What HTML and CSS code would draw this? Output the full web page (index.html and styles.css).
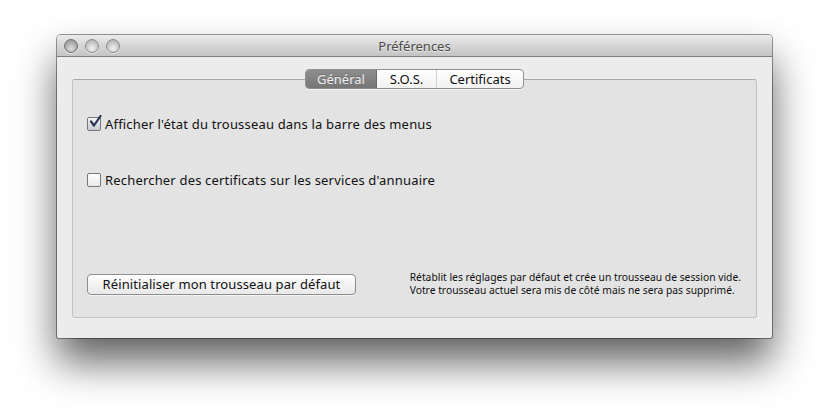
FILE: index.html
```html
<!DOCTYPE html>
<html lang="fr">
<head>
<meta charset="utf-8">
<title>Préférences</title>
<link rel="stylesheet" href="styles.css">
</head>
<body>
<div class="window">
  <div class="titlebar">
    <div class="lights">
      <span class="light light-close"></span>
      <span class="light"></span>
      <span class="light"></span>
    </div>
    <div class="title">Préférences</div>
  </div>
  <div class="content">
    <div class="tabs">
      <span class="tab tab-active">Général</span>
      <span class="tab">S.O.S.</span>
      <span class="tab tab-sep">Certificats</span>
    </div>
    <div class="group">
      <label class="check-row">
        <span class="box checked">
          <svg width="14" height="14" viewBox="0 0 14 14"><path d="M3 6.5 L6 10.5 L12.5 1" fill="none" stroke="#2a3550" stroke-width="2.2" stroke-linecap="round" stroke-linejoin="round"/></svg>
        </span>
        <span>Afficher l'état du trousseau dans la barre des menus</span>
      </label>
      <label class="check-row second">
        <span class="box"></span>
        <span>Rechercher des certificats sur les services d'annuaire</span>
      </label>
      <div class="bottom">
        <button class="btn">Réinitialiser mon trousseau par défaut</button>
        <p class="note">Rétablit les réglages par défaut et crée un trousseau de session vide.<br>Votre trousseau actuel sera mis de côté mais ne sera pas supprimé.</p>
      </div>
    </div>
  </div>
</div>
</body>
</html>
```
FILE: styles.css
```css
html, body {
  margin: 0;
  background: #ffffff;
}
body {
  box-sizing: border-box;
  min-height: 417px;
  padding: 35px 0 0 57px;
  font-family: "Noto Sans", "DejaVu Sans", sans-serif;
  color: #111;
}
.window {
  width: 715px;
  height: 303px;
  background: #ececec;
  border-radius: 4px 4px 2px 2px;
  box-shadow: 0 24px 40px rgba(0,0,0,0.62), 0 0 0 1px rgba(0,0,0,0.4);
  display: flex;
  flex-direction: column;
  overflow: hidden;
}
.titlebar {
  height: 21px;
  border-bottom: 1px solid #7d7d7d;
  background: linear-gradient(#ebebeb, #d6d6d6 50%, #c4c4c4);
  display: flex;
  align-items: center;
  position: relative;
}
.lights {
  display: flex;
  gap: 7px;
  padding-left: 7px;
}
.light {
  width: 12px;
  height: 12px;
  border-radius: 50%;
  border: 1px solid #8c8c8c;
  background: radial-gradient(circle at 50% 70%, #f2f2f2 0%, #cfcfcf 45%, #a9a9a9 100%);
  box-shadow: 0 1px 0 rgba(255,255,255,0.6);
}
.light-close {
  border-color: #6f6f6f;
  background: radial-gradient(circle at 50% 70%, #e0e0e0 0%, #b4b4b4 45%, #8c8c8c 100%);
}
.title {
  position: absolute;
  left: 0;
  right: 0;
  text-align: center;
  font-size: 13px;
  color: #4a4a4a;
  text-shadow: 0 1px 0 rgba(255,255,255,0.6);
  pointer-events: none;
}
.content {
  padding: 12px 15px 0 15px;
  display: flex;
  flex-direction: column;
}
.tabs {
  align-self: center;
  display: flex;
  height: 18px;
  border: 1px solid #8f8f8f;
  border-radius: 4px;
  overflow: hidden;
  margin-bottom: -10px;
  position: relative;
  z-index: 1;
  box-shadow: 0 1px 0 rgba(255,255,255,0.5);
  background: linear-gradient(#ffffff, #f1f1f1);
}
.tab {
  font-size: 13px;
  line-height: 18px;
  padding: 0 10px;
  color: #111;
}
.tab:nth-child(1) { width: 50px; text-align: center; }
.tab:nth-child(2) { width: 39px; text-align: center; }
.tab:nth-child(3) { width: 66px; text-align: center; }
.tab-active {
  background: linear-gradient(#8e8e8e, #767676);
  color: #eeeeee;
  text-shadow: 0 -1px 0 rgba(0,0,0,0.2);
  border-right: 1px solid #6a6a6a;
}
.tab-sep {
  border-left: 1px solid #cfcfcf;
}
.group {
  height: 237px;
  background: #e3e3e3;
  border: 1px solid #c2c2c2;
  border-top-color: #a8a8a8;
  border-radius: 3px;
  padding: 0 14px 0 14px;
  display: flex;
  flex-direction: column;
}
.check-row {
  display: flex;
  align-items: center;
  gap: 4px;
  font-size: 13px;
  letter-spacing: 0.18px;
  margin-top: 37px;
  height: 14px;
}
.check-row.second {
  margin-top: 42px;
}
.box {
  width: 12px;
  height: 12px;
  border: 1px solid #777;
  border-radius: 2px;
  background: linear-gradient(#ffffff, #e9e9e9);
  position: relative;
  flex: none;
}
.box.checked {
  background: linear-gradient(#f4f4f6, #c8cbd4);
}
.box svg {
  position: absolute;
  left: 0;
  top: -3px;
}
.bottom {
  margin-top: 84px;
  display: flex;
  align-items: center;
  justify-content: space-between;
}
.btn {
  width: 269px;
  height: 21px;
  font-family: inherit;
  font-size: 13px;
  letter-spacing: 0.1px;
  color: #111;
  background: linear-gradient(#ffffff, #f3f3f3 50%, #e9e9e9);
  border: 1px solid #8e8e8e;
  border-radius: 4px;
  padding: 0;
  box-shadow: 0 1px 0 rgba(255,255,255,0.6);
}
.note {
  margin: 0 1px 0 0;
  font-size: 10.3px;
  line-height: 13px;
  color: #111;
  white-space: nowrap;
}
```
